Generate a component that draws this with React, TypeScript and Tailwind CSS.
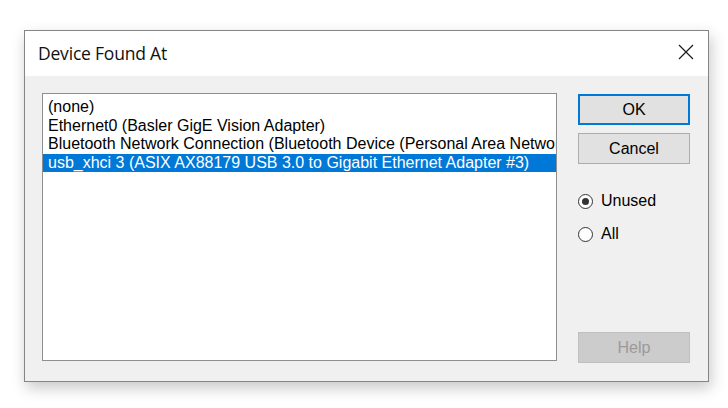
import React from 'react';

const items = [
  '(none)',
  'Ethernet0 (Basler GigE Vision Adapter)',
  'Bluetooth Network Connection (Bluetooth Device (Personal Area Network) #2)',
  'usb_xhci 3 (ASIX AX88179 USB 3.0 to Gigabit Ethernet Adapter #3)',
];

function Radio({ label, checked }: { label: string; checked?: boolean }) {
  return (
    <div className="flex items-center h-[20px]">
      <span className="w-[15px] h-[15px] rounded-full border border-[#333] bg-white flex items-center justify-center">
        {checked && <span className="w-[7px] h-[7px] rounded-full bg-[#333]" />}
      </span>
      <span className="ml-[8px] text-[16px] text-black">{label}</span>
    </div>
  );
}

export default function App() {
  return (
    <div className="w-[728px] h-[408px] bg-white pt-[30px] pl-[24px] overflow-hidden font-['Liberation_Sans',Arial,sans-serif]">
      <div className="w-[685px] h-[352px] flex flex-col border border-[#858585] shadow-[2px_6px_14px_rgba(0,0,0,0.22)]">
        {/* title bar */}
        <div className="h-[45px] bg-white flex items-center justify-between pl-[13px] pr-[13px]">
          <span className="text-[17.5px] text-[#111] font-['Open_Sans','Noto_Sans',sans-serif] tracking-[-0.2px]">
            Device Found At
          </span>
          <svg width="16" height="16" viewBox="0 0 16 16" className="mr-[1px] -mt-[3px]">
            <path d="M1 1 L15 15 M15 1 L1 15" stroke="#1a1a1a" strokeWidth="1.2" fill="none" />
          </svg>
        </div>

        {/* body */}
        <div className="flex-1 bg-[#f0f0f0] flex pt-[17px] pl-[17px] pr-[16px] pb-[18px]">
          <div className="w-[515px] h-[268px] bg-white border border-[#8f8f8f] pt-[4px] overflow-hidden">
            {items.map((t, i) => (
              <div
                key={t}
                className={
                  'h-[18.5px] leading-[18.5px] pl-[5px] whitespace-nowrap overflow-hidden text-[16px] ' +
                  (i === 3 ? 'bg-[#0078d7] text-white' : 'text-black')
                }
              >
                {t}
              </div>
            ))}
          </div>

          <div className="ml-[21px] w-[112px] flex flex-col">
            <button className="mt-[1px] h-[31px] bg-[#e1e1e1] border-2 border-[#0078d7] text-[16px] text-black">OK</button>
            <button className="mt-[8px] h-[31px] bg-[#e1e1e1] border border-[#adadad] text-[16px] text-black">
              Cancel
            </button>
            <div className="mt-[27px] flex flex-col gap-[13px]">
              <Radio label="Unused" checked />
              <Radio label="All" />
            </div>
            <button className="mt-auto h-[31px] bg-[#cccccc] border border-[#bfbfbf] text-[16px] text-[#9a9a9a]">
              Help
            </button>
          </div>
        </div>
      </div>
    </div>
  );
}
